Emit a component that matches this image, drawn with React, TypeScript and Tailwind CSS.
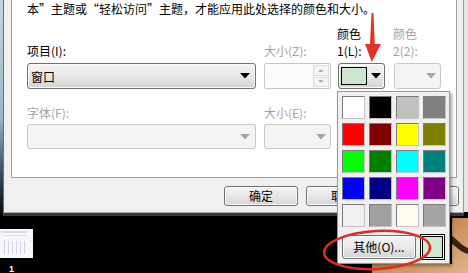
import React from "react"

const font = { fontFamily: '"Noto Sans CJK SC", "Noto Sans", sans-serif' }

const swatches = [
  "#ffffff", "#000000", "#c0c0c0", "#808080",
  "#ff0000", "#800000", "#ffff00", "#808000",
  "#00ff00", "#008000", "#00ffff", "#008080",
  "#0000ff", "#000080", "#ff00ff", "#800080",
  "#f0f0f0", "#a0a0a0", "#fffbf0", "#a4a4a4",
]

function Arrow({ color = "#000" }: { color?: string }) {
  return (
    <svg width="10" height="6" viewBox="0 0 10 6">
      <polygon points="0,0 10,0 5,5.5" fill={color} />
    </svg>
  )
}

function WinButton({ label, className = "" }: { label: string; className?: string }) {
  return (
    <div
      className={`flex items-center justify-center rounded-[3px] border border-[#707070] bg-linear-to-b from-[#f4f4f4] via-[#e8e8e8] to-[#d4d4d4] text-[12px] leading-none text-black shadow-[inset_0_0_0_1px_#fbfbfb] ${className}`}
    >
      {label}
    </div>
  )
}

export default function App() {
  return (
    <div className="relative h-[273px] w-[468px] overflow-hidden bg-black" style={font}>
      {/* desktop behind the dialog */}
      <svg className="absolute inset-0" width="468" height="273">
        <defs>
          <linearGradient id="leftEdge" x1="0" y1="0" x2="0" y2="1">
            <stop offset="0" stopColor="#c4d6e2" />
            <stop offset="0.55" stopColor="#9db4c6" />
            <stop offset="0.8" stopColor="#3c5062" />
            <stop offset="1" stopColor="#0a0d10" />
          </linearGradient>
          <linearGradient id="wood" x1="0" y1="0" x2="1" y2="1">
            <stop offset="0" stopColor="#8a5228" />
            <stop offset="0.5" stopColor="#c98d58" />
            <stop offset="1" stopColor="#e0b48a" />
          </linearGradient>
        </defs>
        <rect x="0" y="0" width="3" height="214" fill="url(#leftEdge)" />
        <rect x="464" y="0" width="4" height="212" fill="#e4e4e4" />
        <polygon points="452,218 468,218 468,273 372,273 372,264 452,264" fill="url(#wood)" />
        <path d="M452 236 C 458 240, 462 246, 468 248 L 468 254 C 460 252, 456 246, 452 244 Z" fill="#3a2212" />
        <rect x="0" y="229" width="33" height="29" fill="#f6f7fa" />
        {[4, 8, 12, 16, 20, 24].map((x) => (
          <rect key={x} x={x} y="241" width="1" height="13" fill="#ccd4e6" />
        ))}
        <rect x="1" y="231" width="26" height="2" fill="#d2daee" />
        <rect x="4" y="235" width="22" height="1" fill="#dde1ec" />
        <text x="9" y="272" fill="#fff" fontSize="9" fontWeight="bold" fontFamily="Liberation Sans, sans-serif">
          1
        </text>
      </svg>

      {/* dialog */}
      <div className="relative ml-[3px] w-[461px] border-b-[3px] border-[#3a3a3a]">
        <div className="flex h-[213px] flex-col border-x border-b border-l-[#6e6e6e] border-r-[#9a9a9a] border-b-[#a8a8a8] bg-[#f0f0f0] pl-[7px]">
          <div className="h-[178px] w-[446px] border-x border-b border-[#a0a0a0] bg-white pl-[15px] text-[12px] leading-[17px] text-black">
            <div className="whitespace-nowrap">本”主题或“轻松访问”主题，才能应用此处选择的颜色和大小。</div>

            {/* labels */}
            <div className="mt-[8px] flex h-[34px] items-end">
              <div className="w-[229px]">项目(I):</div>
              <div className="ml-[8px] w-[67px] text-[#a3a3a3]">大小(Z):</div>
              <div className="ml-[6px] w-[48px]">
                颜色
                <br />
                1(L):
              </div>
              <div className="ml-[8px] w-[48px] text-[#a3a3a3]">
                颜色
                <br />
                2(2):
              </div>
            </div>

            {/* controls */}
            <div className="mt-[4px] flex h-[26px]">
              <div className="flex w-[229px] items-center justify-between rounded-[3px] border border-[#707070] bg-linear-to-b from-[#f4f4f4] via-[#e9e9e9] to-[#d3d3d3] pl-[3px] pr-[5px] shadow-[inset_0_0_0_1px_#fafafa]">
                <span>窗口</span>
                <Arrow />
              </div>
              <div className="ml-[8px] flex w-[67px] justify-end rounded-[2px] border border-[#c6c6c6] bg-[#fbfbfb] p-[1px]">
                <div className="flex w-[16px] flex-col gap-[1px]">
                  <div className="flex flex-1 items-center justify-center border border-[#dcdcdc] bg-[#f4f4f4]">
                    <svg width="6" height="3" viewBox="0 0 6 3">
                      <polygon points="3,0 6,3 0,3" fill="#b4b4b4" />
                    </svg>
                  </div>
                  <div className="flex flex-1 items-center justify-center border border-[#dcdcdc] bg-[#f4f4f4]">
                    <svg width="6" height="3" viewBox="0 0 6 3">
                      <polygon points="0,0 6,0 3,3" fill="#b4b4b4" />
                    </svg>
                  </div>
                </div>
              </div>
              <div className="ml-[7px] flex w-[47px] items-center gap-[4px] rounded-[3px] border border-[#707070] bg-linear-to-b from-[#f4f4f4] via-[#e9e9e9] to-[#d3d3d3] pl-[2px] shadow-[inset_0_0_0_1px_#fafafa]">
                <div className="h-[18px] w-[26px] border border-black bg-[#cce6cd]" />
                <Arrow />
              </div>
              <div className="ml-[9px] flex w-[47px] items-center justify-end rounded-[3px] border border-[#c8c8c8] bg-[#f4f4f4] pr-[4px]">
                <Arrow color="#a6a6a6" />
              </div>
            </div>

            <div className="mt-[15px] flex h-[17px] text-[#a3a3a3]">
              <div className="w-[229px]">字体(F):</div>
              <div className="ml-[8px] w-[67px]">大小(E):</div>
            </div>

            <div className="mt-[3px] flex h-[25px]">
              <div className="flex w-[229px] items-center justify-end rounded-[3px] border border-[#c8c8c8] bg-[#f4f4f4] pr-[5px]">
                <Arrow color="#a6a6a6" />
              </div>
              <div className="ml-[8px] flex w-[67px] items-center justify-end rounded-[3px] border border-[#c8c8c8] bg-[#f4f4f4] pr-[4px]">
                <Arrow color="#a6a6a6" />
              </div>
            </div>
          </div>

          {/* buttons */}
          <div className="mt-[8px] flex">
            <WinButton label="确定" className="ml-[213px] h-[20px] w-[74px]" />
            <WinButton label="取消" className="ml-[8px] h-[20px] w-[74px]" />
            <WinButton label="应用(A)" className="ml-[7px] h-[20px] w-[72px]" />
          </div>
        </div>
      </div>

      {/* colour picker popup */}
      <div className="absolute left-[337px] top-[91px] flex h-[173px] w-[113px] flex-col border border-[#979797] bg-[#f0f0f0] p-[4px] pb-[3px] shadow-[2px_2px_3px_rgba(0,0,0,0.35)]">
        <div className="grid grid-cols-[repeat(4,23px)] gap-[4px]">
          {swatches.map((c, i) => (
            <div
              key={i}
              className="h-[23px] w-[23px] border border-t-[#7c7c7c] border-l-[#7c7c7c] border-b-[#c4c4c4] border-r-[#c4c4c4]"
              style={{ backgroundColor: c }}
            />
          ))}
        </div>
        <div className="mt-[7px] flex h-[26px] items-center">
          <WinButton label="其他(O)..." className="h-[24px] w-[76px]" />
          <div className="ml-[4px] h-[26px] w-[26px] border border-black bg-white p-[1px]">
            <div className="h-full w-full border border-black bg-[#cfe8d0]" />
          </div>
        </div>
      </div>

      {/* red annotations */}
      <svg className="pointer-events-none absolute inset-0" width="468" height="273">
        <polygon points="371.5,13 373.5,13 374.8,44 381,44 371.8,62 365,44 370,44" fill="#e3332c" />
        <ellipse cx="377" cy="250" rx="53" ry="19" fill="none" stroke="#e02a24" strokeWidth="2.5" transform="rotate(-3 377 250)" />
      </svg>
    </div>
  )
}
